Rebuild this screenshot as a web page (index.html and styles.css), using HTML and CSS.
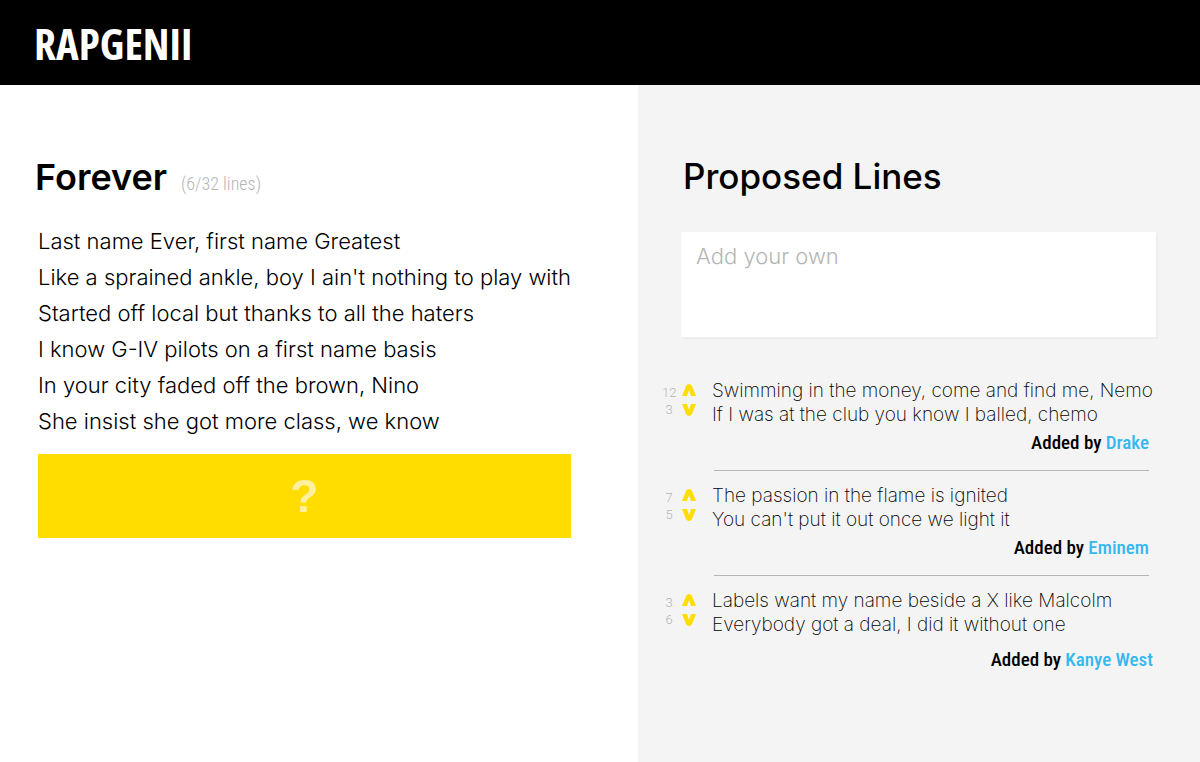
FILE: index.html
```
<!DOCTYPE html>
<html lang="en">
<head>
<meta charset="utf-8">
<meta name="viewport" content="width=device-width, initial-scale=1">
<title>RapGenii</title>
<link rel="stylesheet" href="styles.css">
</head>
<body>
<header class="site-header"><a class="logo" href="#">RAPGENII</a></header>
<main class="columns">
  <section class="song">
    <div class="song-heading">
      <h1 class="title">Forever</h1>
      <span class="line-count">(6/32 lines)</span>
    </div>
    <div class="lyrics">
      <p>Last name Ever, first name Greatest</p>
      <p>Like a sprained ankle, boy I ain't nothing to play with</p>
      <p>Started off local but thanks to all the haters</p>
      <p>I know G-IV pilots on a first name basis</p>
      <p>In your city faded off the brown, Nino</p>
      <p>She insist she got more class, we know</p>
    </div>
    <div class="next-line">?</div>
  </section>
  <section class="proposals">
    <h2 class="title">Proposed Lines</h2>
    <textarea class="own-line" aria-label="Add your own" placeholder="Add your own"></textarea>
    <ul class="proposal-list">
      <li class="proposal">
        <div class="votes">
          <div class="counts"><span>12</span><span>3</span></div>
          <div class="arrows">
            <button class="vote" type="button" aria-label="Vote up"><svg viewBox="0 0 14 12"><path d="M0 12 4 2Q5 0 7 0T10 2L14 12H9L7 6 5 12Z"/></svg></button>
            <button class="vote" type="button" aria-label="Vote down"><svg viewBox="0 0 14 12"><path d="M0 0 4 10Q5 12 7 12T10 10L14 0H9L7 6 5 0Z"/></svg></button>
          </div>
        </div>
        <div class="entry">
          <p>Swimming in the money, come and find me, Nemo</p>
          <p>If I was at the club you know I balled, chemo</p>
          <div class="credit">Added by <a href="#">Drake</a></div>
        </div>
      </li>
      <li class="proposal">
        <div class="votes">
          <div class="counts"><span>7</span><span>5</span></div>
          <div class="arrows">
            <button class="vote" type="button" aria-label="Vote up"><svg viewBox="0 0 14 12"><path d="M0 12 4 2Q5 0 7 0T10 2L14 12H9L7 6 5 12Z"/></svg></button>
            <button class="vote" type="button" aria-label="Vote down"><svg viewBox="0 0 14 12"><path d="M0 0 4 10Q5 12 7 12T10 10L14 0H9L7 6 5 0Z"/></svg></button>
          </div>
        </div>
        <div class="entry">
          <p>The passion in the flame is ignited</p>
          <p>You can't put it out once we light it</p>
          <div class="credit">Added by <a href="#">Eminem</a></div>
        </div>
      </li>
      <li class="proposal">
        <div class="votes">
          <div class="counts"><span>3</span><span>6</span></div>
          <div class="arrows">
            <button class="vote" type="button" aria-label="Vote up"><svg viewBox="0 0 14 12"><path d="M0 12 4 2Q5 0 7 0T10 2L14 12H9L7 6 5 12Z"/></svg></button>
            <button class="vote" type="button" aria-label="Vote down"><svg viewBox="0 0 14 12"><path d="M0 0 4 10Q5 12 7 12T10 10L14 0H9L7 6 5 0Z"/></svg></button>
          </div>
        </div>
        <div class="entry">
          <p>Labels want my name beside a X like Malcolm</p>
          <p>Everybody got a deal, I did it without one</p>
          <div class="credit">Added by <a href="#">Kanye West</a></div>
        </div>
      </li>
    </ul>
  </section>
</main>
</body>
</html>
```
FILE: styles.css
```
* {
  box-sizing: border-box;
}

body {
  display: flex;
  flex-direction: column;
  min-height: 100vh;
  margin: 0;
  background: #fff;
  color: #000;
  font-family: Inter, "Liberation Sans", sans-serif;
  font-weight: 300;
}

p,
h1,
h2,
ul {
  margin: 0;
  padding: 0;
}

a {
  text-decoration: none;
}

.site-header {
  display: flex;
  align-items: center;
  min-height: 85px;
  padding: 2px 34px 0;
  background: #000;
}

.logo {
  color: #fff;
  font-family: "Open Sans", sans-serif;
  font-size: 43px;
  font-weight: 700;
  font-stretch: condensed;
  line-height: 56px;
}

.columns {
  display: grid;
  flex: 1;
  grid-template-columns: 638fr 562fr;
}

.song {
  padding: 68px 67px 40px 38px;
}

.song-heading {
  display: flex;
  align-items: baseline;
  gap: 14px;
  margin-left: -3px;
}

.title {
  font-size: 36px;
  font-weight: 600;
  line-height: 48px;
}

.line-count {
  color: #b5b5b5;
  font-family: "Roboto Condensed", sans-serif;
  font-size: 18px;
  font-weight: 300;
}

.lyrics {
  margin-top: 22px;
  font-size: 22px;
  line-height: 36px;
}

.next-line {
  display: flex;
  align-items: center;
  justify-content: center;
  min-height: 84px;
  margin-top: 15px;
  background: #fd0;
  color: #fff0a0;
  font-family: "Liberation Sans", sans-serif;
  font-size: 46px;
  font-weight: 700;
}

.proposals {
  padding: 67px 44px 40px 24px;
  background: #f4f4f4;
}

.proposals .title {
  margin-left: 21px;
  font-size: 35px;
  font-weight: 550;
}

.own-line {
  display: block;
  width: calc(100% - 19px);
  height: 105px;
  margin: 32px 0 0 19px;
  padding: 6px 15px;
  border: 0;
  background: #fff;
  box-shadow: 2px 2px 1px #eee;
  font: inherit;
  font-size: 22px;
  line-height: 36px;
  resize: none;
}

.own-line::placeholder {
  color: #b5b5b5;
}

.proposal-list {
  margin-top: 42px;
  list-style: none;
}

.proposal {
  display: grid;
  grid-template-columns: 34px 1fr;
  gap: 16px;
}

.votes {
  display: flex;
  align-items: flex-start;
  gap: 6px;
  padding-top: 5px;
}

.counts {
  display: flex;
  flex-direction: column;
  width: 14px;
  color: #b5b5b5;
  font-family: Roboto, sans-serif;
  font-size: 13px;
  line-height: 17px;
  text-align: center;
}

.arrows {
  display: flex;
  flex-direction: column;
  gap: 8px;
}

.vote {
  display: flex;
  padding: 0;
  border: 0;
  background: none;
  color: #fd0;
  cursor: pointer;
}

.vote svg {
  width: 14px;
  height: 12px;
  fill: currentColor;
}

.entry {
  font-size: 19px;
  font-weight: 250;
  line-height: 24px;
}

.proposal + .proposal .entry {
  margin-top: 13px;
}

.proposal + .proposal .votes {
  padding-top: 18px;
}

.credit {
  margin: 4px 7px 0 2px;
  padding-bottom: 15px;
  border-bottom: 1px solid #b5b5b5;
  font-family: "Roboto Condensed", sans-serif;
  font-size: 19px;
  font-weight: 500;
  text-align: right;
}

.proposal:last-child .credit {
  margin: 11px 3px 0 2px;
  border: 0;
}

.credit a {
  color: #35b8f0;
}
```
